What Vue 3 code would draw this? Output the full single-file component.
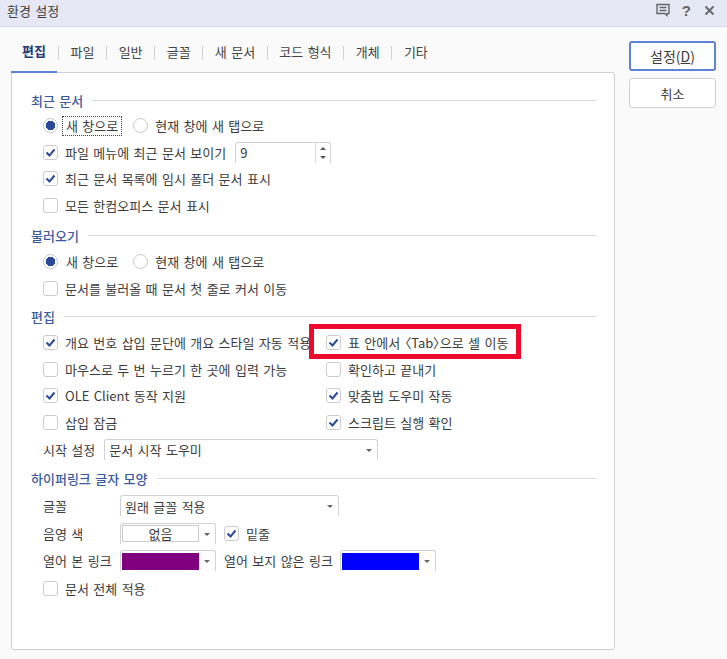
<script setup>
const tabs = ['편집', '파일', '일반', '글꼴', '새 문서', '코드 형식', '개체', '기타']

const editLeft = [
  { label: '개요 번호 삽입 문단에 개요 스타일 자동 적용', on: true },
  { label: '마우스로 두 번 누르기 한 곳에 입력 가능', on: false },
  { label: 'OLE Client 동작 지원', on: true },
  { label: '삽입 잠금', on: false },
]

const editRight = [
  { label: '표 안에서 〈Tab〉으로 셀 이동', on: true, marked: true },
  { label: '확인하고 끝내기', on: false },
  { label: '맞춤법 도우미 작동', on: true },
  { label: '스크립트 실행 확인', on: true },
]
</script>

<template>
  <div class="window">
    <header class="titlebar">
      <span class="title">환경 설정</span>
      <div class="title-icons">
        <svg class="comment" width="14" height="14" viewBox="0 0 14 14" fill="none" stroke="#666" stroke-width="1.4">
          <path d="M1 1.500h12v9h-2v2l-2.500-2h-7.500z" />
          <path d="M3.500 4.500h7M3.500 7.500h7" />
        </svg>
        <span class="help">?</span>
        <svg width="11" height="11" viewBox="0 0 11 11" stroke="#666" stroke-width="1.8">
          <path d="M1.500 1.500l8 8M9.500 1.500l-8 8" />
        </svg>
      </div>
    </header>

    <div class="body">
      <div class="left">
        <nav class="tabs">
          <template v-for="(tab, i) in tabs" :key="tab">
            <span v-if="i > 0" class="tab-sep"></span>
            <span class="tab" :class="{ active: i === 0 }">{{ tab }}</span>
          </template>
        </nav>

        <main class="panel">
          <section class="group first">
            <h3 class="heading"><span>최근 문서</span></h3>
            <div class="row">
              <span class="radio on"></span>
              <span class="focus">새 창으로</span>
              <span class="radio second"></span>
              <span class="text">현재 창에 새 탭으로</span>
            </div>
            <div class="row">
              <span class="box"><svg viewBox="0 0 15 15"><path d="M3.500 7.500l3 3 5-6" /></svg></span>
              <span class="text">파일 메뉴에 최근 문서 보이기</span>
              <span class="spin">
                <span class="spin-value">9</span>
                <span class="spin-arrows"><i class="up"></i><i class="down"></i></span>
              </span>
            </div>
            <div class="row">
              <span class="box"><svg viewBox="0 0 15 15"><path d="M3.500 7.500l3 3 5-6" /></svg></span>
              <span class="text">최근 문서 목록에 임시 폴더 문서 표시</span>
            </div>
            <div class="row">
              <span class="box"></span>
              <span class="text">모든 한컴오피스 문서 표시</span>
            </div>
          </section>

          <section class="group load-group">
            <h3 class="heading"><span>불러오기</span></h3>
            <div class="row">
              <span class="radio on"></span>
              <span class="text plain">새 창으로</span>
              <span class="radio second"></span>
              <span class="text">현재 창에 새 탭으로</span>
            </div>
            <div class="row">
              <span class="box"></span>
              <span class="text">문서를 불러올 때 문서 첫 줄로 커서 이동</span>
            </div>
          </section>

          <section class="group edit-group">
            <h3 class="heading"><span>편집</span></h3>
            <div class="columns">
              <div>
                <div v-for="item in editLeft" :key="item.label" class="row">
                  <span class="box"><svg v-if="item.on" viewBox="0 0 15 15"><path d="M3.500 7.500l3 3 5-6" /></svg></span>
                  <span class="text">{{ item.label }}</span>
                </div>
              </div>
              <div>
                <div v-for="item in editRight" :key="item.label" class="row">
                  <span class="box"><svg v-if="item.on" viewBox="0 0 15 15"><path d="M3.500 7.500l3 3 5-6" /></svg></span>
                  <span class="text" :class="{ narrow: item.marked }">{{ item.label }}</span>
                  <span v-if="item.marked" class="marker"></span>
                </div>
              </div>
            </div>
            <div class="row start">
              <span class="text">시작 설정</span>
              <span class="combo start-combo">문서 시작 도우미<i class="caret"></i></span>
            </div>
          </section>

          <section class="group link-group">
            <h3 class="heading"><span>하이퍼링크 글자 모양</span></h3>
            <div class="row">
              <span class="text field">글꼴</span>
              <span class="combo font-combo">원래 글꼴 적용<i class="caret"></i></span>
            </div>
            <div class="row">
              <span class="text field">음영 색</span>
              <span class="combo color-combo"><span class="swatch none">없음</span><i class="caret"></i></span>
              <span class="box underline"><svg viewBox="0 0 15 15"><path d="M3.500 7.500l3 3 5-6" /></svg></span>
              <span class="text">밑줄</span>
            </div>
            <div class="row">
              <span class="text field">열어 본 링크</span>
              <span class="combo color-combo"><span class="swatch visited"></span><i class="caret"></i></span>
              <span class="text unvisited">열어 보지 않은 링크</span>
              <span class="combo color-combo"><span class="swatch link"></span><i class="caret"></i></span>
            </div>
            <div class="row">
              <span class="box"></span>
              <span class="text">문서 전체 적용</span>
            </div>
          </section>
        </main>
      </div>

      <aside class="actions">
        <button class="btn primary">설정(<u>D</u>)</button>
        <button class="btn">취소</button>
      </aside>
    </div>
  </div>
</template>

<style scoped>
.window {
  width: 727px;
  height: 659px;
  overflow: hidden;
  background: #fafafa;
  color: #3c3c3c;
  font-family: "Noto Sans CJK KR", "Noto Sans", sans-serif;
  font-size: 13px;
  word-spacing: 1.5px;
}

.titlebar {
  height: 27px;
  box-sizing: border-box;
  display: flex;
  align-items: center;
  justify-content: space-between;
  padding: 0 12px 6px 7px;
  background: #e6e9f5;
  border-bottom: 1px solid #d5d9e8;
}

.title-icons {
  display: flex;
  align-items: center;
  gap: 13px;
}

.comment {
  margin-right: -1px;
}

.help {
  font-weight: 700;
  font-size: 15px;
  color: #666;
  font-family: "Liberation Sans", sans-serif;
}

.body {
  display: flex;
  padding: 0 11px;
}

.left {
  width: 604px;
}

.tabs {
  height: 45px;
  display: flex;
  align-items: center;
}

.tab {
  height: 45px;
  line-height: 50px;
  padding: 0 11.6px;
  color: #444;
  white-space: nowrap;
}

.tab.active {
  padding: 0 11px;
  margin-right: 1px;
  color: #223a78;
  font-weight: 700;
  border-bottom: 2px solid #5f83d8;
}

.tab-sep {
  width: 1px;
  height: 14px;
  margin-top: 6px;
  background: #d3d3d3;
}

.panel {
  height: 578px;
  box-sizing: border-box;
  padding: 0 17px 0 19px;
  background: #fff;
  border: 1px solid #cfcfcf;
  border-radius: 3px;
}

.group.first {
  margin-top: 14.5px;
}

.load-group {
  margin-top: 4.6px;
}

.edit-group {
  margin-top: 2.8px;
}

.link-group {
  margin-top: 3.5px;
}

.heading {
  height: 25px;
  margin: 0;
  display: flex;
  align-items: center;
  gap: 9px;
  font-size: 13px;
  font-weight: 500;
  color: #3b5a9e;
}

.heading::after {
  content: "";
  flex: 1;
  height: 1px;
  background: #dcdcdc;
}

.row {
  position: relative;
  height: 26.6px;
  display: flex;
  align-items: center;
  padding-left: 12px;
  white-space: nowrap;
}

.link-group .row {
  height: 27.6px;
}

.link-group .row:first-of-type {
  margin-top: 0.5px;
}

.text {
  margin-left: 7px;
}

.text.narrow {
  font-feature-settings: "palt";
}

.columns {
  display: grid;
  grid-template-columns: 283px 1fr;
}

.box {
  width: 15px;
  height: 15px;
  flex: none;
  box-sizing: border-box;
  border: 1px solid #ccc;
  border-radius: 3px;
  background: #fff;
}

.box svg {
  display: block;
  width: 15px;
  height: 15px;
  margin: -1px;
  fill: none;
  stroke: #2d4a9a;
  stroke-width: 2;
}

.radio {
  width: 15px;
  height: 15px;
  flex: none;
  box-sizing: border-box;
  border: 1px solid #c8c8c8;
  border-radius: 50%;
  background: #fff;
}

.radio.on {
  background: radial-gradient(circle, #2d4a9a 0 4.500px, #fff 5px);
}

.radio.second {
  margin-left: 15px;
}

.text.plain {
  margin-left: 8px;
}

.focus {
  margin-left: 4px;
  padding: 0 3px;
  line-height: 18px;
  border: 1px dotted #444;
  margin-right: -4px;
}

.spin {
  width: 96px;
  height: 21px;
  margin-left: 9px;
  box-sizing: border-box;
  display: flex;
  justify-content: space-between;
  border: 1px solid #d2d2d2;
  border-bottom: 0;
  border-radius: 3px 3px 0 0;
}

.spin-value {
  padding-left: 4px;
  line-height: 20px;
}

.spin-arrows {
  width: 14px;
  display: flex;
  flex-direction: column;
  align-items: center;
  justify-content: center;
  gap: 6px;
  border-left: 1px solid #d9d9d9;
}

.up {
  border: 3px solid transparent;
  border-top: 0;
  border-bottom: 3px solid #555;
}

.down {
  border: 3px solid transparent;
  border-bottom: 0;
  border-top: 3px solid #555;
}

.marker {
  position: absolute;
  left: -5px;
  top: -5px;
  width: 212px;
  height: 35px;
  box-sizing: border-box;
  border: 5px solid #ee0a2c;
}

.start {
  height: 27px;
  padding-left: 5px;
}

.combo {
  position: relative;
  height: 21px;
  box-sizing: border-box;
  display: flex;
  align-items: center;
  padding-left: 4px;
  border: 1px solid #d2d2d2;
  border-bottom: 0;
  border-radius: 3px 3px 0 0;
  background: #fff;
}

.caret {
  position: absolute;
  right: 5px;
  top: 9px;
  border: 3px solid transparent;
  border-bottom: 0;
  border-top: 3px solid #666;
}

.start-combo {
  width: 274px;
  margin-left: 9px;
}

.field {
  width: 77px;
  margin-left: 0;
}

.font-combo {
  width: 219px;
}

.color-combo {
  width: 96px;
  padding-left: 1px;
}

.swatch {
  width: 77px;
  height: 17px;
  box-sizing: border-box;
  text-align: center;
  line-height: 16px;
}

.swatch.none {
  border: 1px solid #ccc;
}

.swatch.visited {
  background: #800080;
}

.swatch.link {
  background: #0000ff;
}

.underline {
  margin-left: 8px;
}

.unvisited {
  margin: 0 7px 0 8px;
}

.actions {
  margin-left: 14px;
  padding-top: 14px;
  display: flex;
  flex-direction: column;
  gap: 7px;
}

.btn {
  width: 87px;
  height: 30px;
  padding: 0;
  background: #fff;
  color: #3c3c3c;
  border: 1px solid #d2d2d2;
  border-radius: 3px;
  font: inherit;
}

.btn.primary {
  border: 2px solid #5f83d8;
  font-size: 14px;
}
</style>
